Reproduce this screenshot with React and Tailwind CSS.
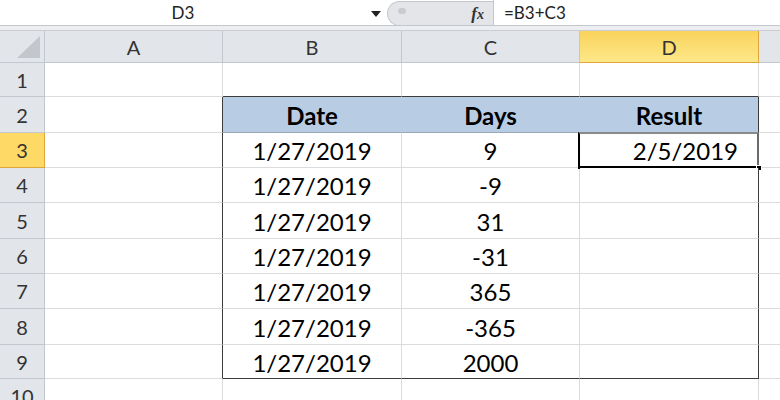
import React from "react";

const FONT = { fontFamily: "Lato, 'Open Sans', sans-serif" };

const rows = [
  { n: "1", h: "h-[34px]", cells: null },
  { n: "2", h: "h-[36px]", cells: ["Date", "Days", "Result"], head: true },
  { n: "3", h: "h-[35px]", cells: ["1/27/2019", "9", "2/5/2019"], sel: true },
  { n: "4", h: "h-[35px]", cells: ["1/27/2019", "-9", ""] },
  { n: "5", h: "h-[36px]", cells: ["1/27/2019", "31", ""] },
  { n: "6", h: "h-[35px]", cells: ["1/27/2019", "-31", ""] },
  { n: "7", h: "h-[35px]", cells: ["1/27/2019", "365", ""] },
  { n: "8", h: "h-[36px]", cells: ["1/27/2019", "-365", ""] },
  { n: "9", h: "h-[34px]", cells: ["1/27/2019", "2000", ""], last: true },
  { n: "10", h: "h-[35px]", cells: null },
];

function RowHeader({ n, active }) {
  if (active) {
    return (
      <div className="w-[45px] shrink-0 h-full flex items-center justify-center bg-[#ffd966] border-r border-b border-[#e0a63c] text-[20px] text-[#333]">
        {n}
      </div>
    );
  }
  return (
    <div className="w-[45px] shrink-0 h-full flex items-center justify-center bg-[#e2e5e9] border-r border-b border-[#c2c7cd] text-[20px] text-[#333]">
      {n}
    </div>
  );
}

export default function App() {
  return (
    <div className="w-[780px] h-[400px] overflow-hidden bg-white text-black" style={FONT}>
      {/* formula bar */}
      <div className="h-[26px] flex border-b border-[#c4c8cd] bg-white">
        <div className="w-[387px] shrink-0 flex items-center">
          <div className="w-[366px] text-center text-[17px] text-[#222]">D3</div>
          <svg width="12" height="8" viewBox="0 0 12 8" className="ml-[4px] mt-[2px]">
            <path d="M1 1 L11 1 L6 7 Z" fill="#222" />
          </svg>
        </div>
        <div className="w-[106px] shrink-0 h-[25px] mt-[1px] rounded-l-[13px] bg-[#e3e5e8] border border-r-0 border-[#c3c6ca] flex items-center relative">
          <div className="ml-[10px] mb-[6px] w-[8px] h-[6px] rounded-full bg-[#c9cbce]" />
          <div className="ml-auto mr-[9px] text-[17px] italic font-bold text-[#333]" style={{ fontFamily: "'Liberation Serif', serif" }}>
            f<span className="text-[14px]">x</span>
          </div>
        </div>
        <div className="flex-1 flex items-center border-l border-[#c3c6ca] pl-[10px] text-[17px] text-[#222]">
          =B3+C3
        </div>
      </div>
      {/* spacer band */}
      <div className="h-[5px] bg-[#eceef1] border-b border-[#c9cdd2]" />
      {/* column headers */}
      <div className="h-[32px] flex">
        <div className="w-[45px] shrink-0 h-full bg-[#e2e5e9] border-r border-b border-[#c2c7cd] flex items-end justify-end pr-[4px] pb-[4px]">
          <svg width="23" height="22" viewBox="0 0 23 22">
            <path d="M23 0 L23 22 L0 22 Z" fill="#c3c6ca" />
          </svg>
        </div>
        <div className="w-[178px] shrink-0 h-full flex items-center justify-center bg-[#e2e5e9] border-r border-b border-[#c2c7cd] text-[20px] text-[#333]">A</div>
        <div className="w-[179px] shrink-0 h-full flex items-center justify-center bg-[#e2e5e9] border-r border-b border-[#c2c7cd] text-[20px] text-[#333]">B</div>
        <div className="w-[178px] shrink-0 h-full flex items-center justify-center bg-[#e2e5e9] border-r border-b border-[#c2c7cd] text-[20px] text-[#333]">C</div>
        <div className="w-[179px] shrink-0 h-full flex items-center justify-center bg-gradient-to-b from-[#f9d35a] to-[#fde889] border-r border-b border-[#e0a63c] text-[20px] text-[#333]">D</div>
        <div className="flex-1 h-full bg-[#e2e5e9] border-b border-[#c2c7cd]" />
      </div>
      {/* rows */}
      {rows.map((r) => {
        const inTable = r.cells !== null;
        const aBorder = inTable ? "border-r-[#3c3c3c]" : "border-r-[#dadcdd]";
        const topOfTable = r.n === "1";
        const bBot = r.last || topOfTable ? "border-b-[#3c3c3c]" : r.head ? "border-b-[#9aa7b6]" : "border-b-[#dadcdd]";
        const bg = r.head ? "bg-[#b8cce4] font-bold" : "bg-white";
        const inner = r.head ? "border-r-[#b8cce4]" : "border-r-[#dadcdd]";
        const dRight = inTable ? "border-r-[#3c3c3c]" : "border-r-[#dadcdd]";
        return (
          <div key={r.n} className={`${r.h} flex text-[24px]`}>
            <RowHeader n={r.n} active={r.sel} />
            <div className={`w-[178px] shrink-0 h-full border-r border-b border-b-[#dadcdd] ${aBorder}`} />
            <div className={`w-[179px] shrink-0 h-full border-r border-b ${inner} ${bBot} ${bg} flex items-center justify-center pt-[2px]`}>
              {r.cells && r.cells[0]}
            </div>
            <div className={`w-[178px] shrink-0 h-full border-r border-b ${inner} ${bBot} ${bg} flex items-center justify-center pt-[2px]`}>
              {r.cells && r.cells[1]}
            </div>
            <div className={`w-[179px] shrink-0 h-full border-r border-b ${dRight} ${bBot} ${bg} flex items-center ${r.sel ? "justify-end pr-[20px]" : "justify-center"} pt-[2px] relative`}>
              {r.cells && r.cells[2]}
              {r.sel && (
                <>
                  <div className="absolute left-[-2px] top-[-1px] right-[-1px] bottom-[-2px] border-l-2 border-b-[3px] border-t-2 border-r-2 border-l-black border-b-black border-t-[#8a8a8a] border-r-[#6a6a6a] pointer-events-none" />
                  <div className="absolute right-[-4px] bottom-[-4px] w-[6px] h-[6px] bg-black border border-white" />
                </>
              )}
            </div>
            <div className="flex-1 h-full border-b border-[#dadcdd]" />
          </div>
        );
      })}
    </div>
  );
}
